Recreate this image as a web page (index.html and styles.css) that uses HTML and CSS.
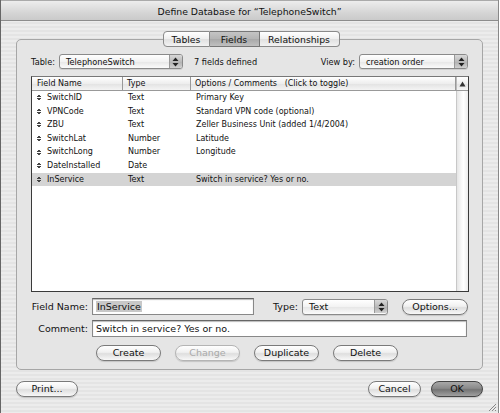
FILE: index.html
```html
<!DOCTYPE html>
<html>
<head>
<meta charset="utf-8">
<link rel="stylesheet" href="styles.css">
</head>
<body>
<div class="window">
  <div class="titlebar">Define Database for “TelephoneSwitch”</div>
  <div class="content">
    <div class="tabs">
      <div class="tab">Tables</div>
      <div class="tab sel">Fields</div>
      <div class="tab">Relationships</div>
    </div>
    <div class="group">
      <div class="toprow">
        <span class="lbl">Table:</span>
        <div class="popup w-table"><span class="ptext">TelephoneSwitch</span><span class="arrows"><svg width="7" height="10" viewBox="0 0 7 10"><path d="M3.5 0.5 L6.5 4 L0.5 4 Z M3.5 9.5 L6.5 6 L0.5 6 Z" fill="#222"/></svg></span></div>
        <span class="count">7 fields defined</span>
        <span class="spacer"></span>
        <span class="lbl">View by:</span>
        <div class="popup w-view"><span class="ptext">creation order</span><span class="arrows"><svg width="7" height="10" viewBox="0 0 7 10"><path d="M3.5 0.5 L6.5 4 L0.5 4 Z M3.5 9.5 L6.5 6 L0.5 6 Z" fill="#222"/></svg></span></div>
      </div>
      <div class="list">
        <div class="lhead">
          <div class="hc c1">Field Name</div>
          <div class="hc c2">Type</div>
          <div class="hc c3">Options / Comments &nbsp;&nbsp;(Click to toggle)</div>
          <div class="hc c4"><svg width="7" height="6" viewBox="0 0 7 6"><path d="M3.5 0.5 L6.5 5.5 L0.5 5.5 Z" fill="#333"/></svg></div>
        </div>
        <div class="lbody">
          <div class="rows">
            <div class="row"><div class="c1"><i class="grip"></i>SwitchID</div><div class="c2">Text</div><div class="c3">Primary Key</div></div>
            <div class="row"><div class="c1"><i class="grip"></i>VPNCode</div><div class="c2">Text</div><div class="c3">Standard VPN code (optional)</div></div>
            <div class="row"><div class="c1"><i class="grip"></i>ZBU</div><div class="c2">Text</div><div class="c3">Zeller Business Unit (added 1/4/2004)</div></div>
            <div class="row"><div class="c1"><i class="grip"></i>SwitchLat</div><div class="c2">Number</div><div class="c3">Latitude</div></div>
            <div class="row"><div class="c1"><i class="grip"></i>SwitchLong</div><div class="c2">Number</div><div class="c3">Longitude</div></div>
            <div class="row"><div class="c1"><i class="grip"></i>DateInstalled</div><div class="c2">Date</div><div class="c3"></div></div>
            <div class="row hl"><div class="c1"><i class="grip"></i>InService</div><div class="c2">Text</div><div class="c3">Switch in service? Yes or no.</div></div>
          </div>
          <div class="scroll"></div>
        </div>
      </div>
      <div class="frow">
        <span class="flbl">Field Name:</span>
        <div class="input w-name"><span class="selt">InService</span></div>
        <span class="lbl tlbl">Type:</span>
        <div class="popup w-type big"><span class="ptext">Text</span><span class="arrows"><svg width="7" height="10" viewBox="0 0 7 10"><path d="M3.5 0.5 L6.5 4 L0.5 4 Z M3.5 9.5 L6.5 6 L0.5 6 Z" fill="#222"/></svg></span></div>
        <div class="btn w-opt">Options...</div>
      </div>
      <div class="frow crow">
        <span class="flbl">Comment:</span>
        <div class="input w-comment">Switch in service? Yes or no.</div>
      </div>
      <div class="brow">
        <div class="btn w-b">Create</div>
        <div class="btn w-b dis">Change</div>
        <div class="btn w-b">Duplicate</div>
        <div class="btn w-b">Delete</div>
      </div>
    </div>
    <div class="bottom">
      <div class="btn w-print">Print...</div>
      <span class="spacer"></span>
      <div class="btn w-cancel">Cancel</div>
      <div class="btn ok">OK</div>
    </div>
  </div>
  <svg class="grip-corner" width="10" height="10" viewBox="0 0 10 10"><path d="M9 2 L2 9 M9 5 L5 9 M9 8 L8 9" stroke="#888" stroke-width="1"/></svg>
</div>
</body>
</html>
```
FILE: styles.css
```css
* { box-sizing: border-box; }
html, body { margin: 0; padding: 0; }
body {
  width: 500px; height: 413px; overflow: hidden;
  font-family: "DejaVu Sans", "Liberation Sans", sans-serif;
  font-size: 9px; color: #111;
  background: #fff;
}
.window {
  position: relative;
  width: 499px; height: 413px;
  border-left: 1px solid #666;
  border-right: 1px solid #888;
  background: repeating-linear-gradient(to bottom, #ececec 0px, #ececec 2px, #e4e4e4 2px, #e4e4e4 4px);
}
.titlebar {
  height: 21px;
  line-height: 21px;
  text-align: center;
  font-size: 9.3px;
  background: linear-gradient(to bottom, #ededed, #d6d6d6 60%, #cacaca);
  border-bottom: 1px solid #8c8c8c;
  border-top: 1px solid #aaa;
}
.content {
  padding: 10px 15px 0 15px;
}
.tabs {
  display: flex;
  justify-content: center;
  height: 16px;
  position: relative;
  z-index: 2;
  margin-left: 3px;
}
.tab {
  height: 16px; line-height: 15px;
  text-align: center;
  font-size: 9.3px;
  background: linear-gradient(to bottom, #ffffff, #eeeeee 50%, #e0e0e0 51%, #f2f2f2);
  border: 1px solid #8a8a8a;
  border-left: none;
}
.tab:first-child { border-left: 1px solid #8a8a8a; border-radius: 4px 0 0 4px; width: 47px; }
.tab:last-child { border-radius: 0 4px 4px 0; width: 80px; }
.tab.sel {
  width: 50px;
  background: linear-gradient(to bottom, #c4c4c4, #b4b4b4 50%, #a8a8a8 51%, #c0c0c0);
  border-color: #777;
}
.group {
  margin-top: -8px;
  height: 331px;
  border: 1px solid #a6a6a6;
  border-radius: 5px;
  background: #e5e5e5;
  padding: 14px 14px 0 14px;
}
.toprow {
  display: flex;
  align-items: center;
  height: 15px;
  font-size: 8.2px;
}
.lbl { margin-right: 4px; }
.spacer { flex: 1; }
.count { margin-left: 11px; }
.popup {
  height: 15px;
  border: 1px solid #8a8a8a;
  border-radius: 3px;
  background: linear-gradient(to bottom, #ffffff, #f2f2f2 50%, #e6e6e6 51%, #fbfbfb);
  display: flex;
  align-items: center;
  box-shadow: 0 1px 0 #cfcfcf;
}
.ptext { flex: 1; padding-left: 6px; }
.arrows {
  width: 13px; height: 13px;
  display: flex; align-items: center; justify-content: center;
  background: linear-gradient(to bottom, #d8d8d8, #bbbbbb 50%, #b0b0b0 51%, #d0d0d0);
  border-radius: 0 2px 2px 0;
  border-left: 1px solid #999;
}
.w-table { width: 124px; }
.w-view { width: 109px; }
.w-type { width: 86px; }
.popup.big { font-size: 9.5px; height: 16px; }
.list {
  margin-top: 7px;
  height: 216px;
  width: 438px;
  border: 1px solid #3a3a3a;
  border-top-color: #777;
  background: #fff;
  display: flex;
  flex-direction: column;
  font-size: 8px;
}
.lhead {
  height: 14px;
  display: flex;
  background: linear-gradient(to bottom, #ffffff, #eeeeee 50%, #e2e2e2 51%, #f4f4f4);
  border-bottom: 1px solid #999;
}
.hc { line-height: 13px; border-right: 1px solid #999; white-space: nowrap; }
.hc.c1 { padding-left: 5px; }
.hc.c2 { padding-left: 4px; }
.hc.c3 { padding-left: 4px; }
.hc.c4 { border-right: none; display: flex; align-items: center; justify-content: center; border-left: 1px solid #bbb; }
.c1 { width: 91px; }
.c2 { width: 68px; }
.c3 { width: 265px; }
.c4 { width: 12px; }
.lbody { flex: 1; display: flex; }
.rows { flex: 1; padding-top: 0; }
.row { display: flex; height: 13.6px; line-height: 13.6px; white-space: nowrap; }
.row .c1 { padding-left: 5px; display: flex; align-items: center; }
.row .c2 { padding-left: 5px; }
.row .c3 { padding-left: 5px; }
.row.hl { background: #d4d4d4; }
.grip {
  display: inline-block;
  width: 4px; height: 7px;
  margin-right: 6px;
  background:
    linear-gradient(to bottom right, transparent 50%, #444 50%) 0 0 / 2px 3px no-repeat,
    linear-gradient(to bottom left, transparent 50%, #444 50%) 2px 0 / 2px 3px no-repeat,
    linear-gradient(to top right, transparent 50%, #444 50%) 0 4px / 2px 3px no-repeat,
    linear-gradient(to top left, transparent 50%, #444 50%) 2px 4px / 2px 3px no-repeat;
}
.scroll {
  width: 13px;
  border-left: 1px solid #c8c8c8;
  background: linear-gradient(to right, #e6e6e6, #f8f8f8 40%, #ffffff 60%, #ececec);
}
.frow {
  display: flex;
  align-items: center;
  margin-top: 6px;
  height: 17px;
}
.flbl { width: 57px; text-align: right; margin-right: 4px; font-size: 9.5px; }
.input {
  height: 17px;
  border: 1px solid #888;
  border-top-color: #666;
  background: #fff;
  padding-left: 3px;
  line-height: 15px;
  box-shadow: inset 0 1px 1px #bbb;
  font-size: 9.5px;
}
.w-name { width: 162px; }
.selt { background: #c8c8c8; padding: 0 1px; }
.tlbl { margin-left: 19px; font-size: 9.5px; }
.w-comment { width: 375px; }
.crow { margin-top: 5px; }
.btn {
  height: 16px;
  line-height: 14px;
  text-align: center;
  border: 1px solid #7a7a7a;
  border-radius: 8px;
  background: linear-gradient(to bottom, #ffffff, #f0f0f0 45%, #dedede 55%, #f8f8f8);
  box-shadow: 0 1px 1px #c4c4c4;
  font-size: 9.5px;
}
.w-opt { width: 66px; margin-left: 14px; }
.brow {
  display: flex;
  margin-top: 8px;
  padding-left: 65px;
  gap: 14px;
}
.w-b { width: 65px; }
.btn.dis { color: #aaa; border-color: #b4b4b4; }
.bottom {
  display: flex;
  margin-top: 11px;
  margin-left: 0px;
}
.w-print { width: 62px; }
.w-cancel { width: 53px; margin-right: 10px; }
.ok {
  width: 52px;
  border-color: #444;
  background: linear-gradient(to bottom, #a8a8a8, #8a8a8a 45%, #747474 55%, #a0a0a0);
  color: #111;
}
.grip-corner { position: absolute; right: 1px; bottom: 1px; }
```
